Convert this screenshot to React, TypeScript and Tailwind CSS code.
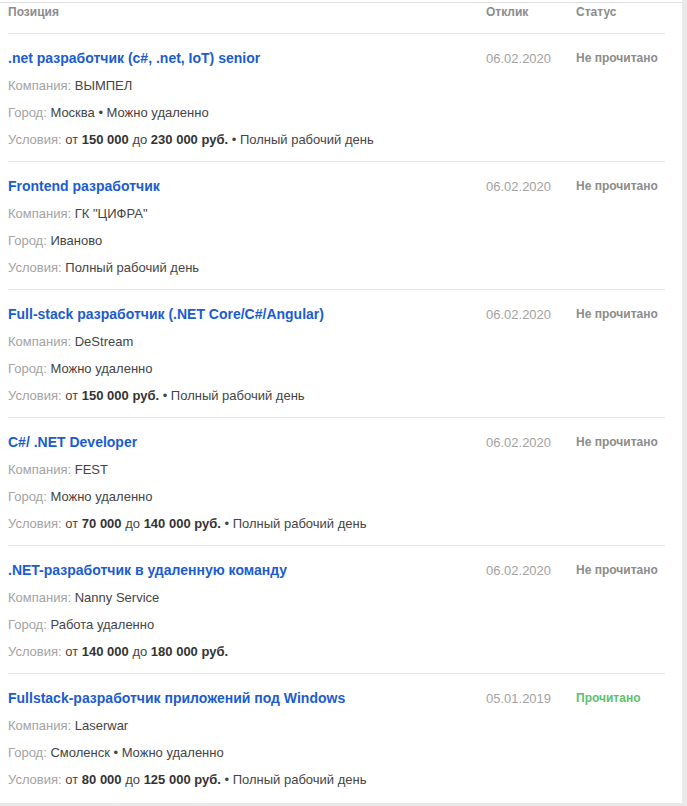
import React from "react";

type Vacancy = {
  title: string;
  company: string;
  city: React.ReactNode;
  terms: React.ReactNode;
  date: string;
  read: boolean;
};

const B = ({ children }: { children: React.ReactNode }) => (
  <b className="font-bold text-[#333]">{children}</b>
);

const vacancies: Vacancy[] = [
  {
    title: ".net разработчик (c#, .net, IoT) senior",
    company: "ВЫМПЕЛ",
    city: "Москва • Можно удаленно",
    terms: (
      <>
        от <B>150 000</B> до <B>230 000 руб.</B> • Полный рабочий день
      </>
    ),
    date: "06.02.2020",
    read: false,
  },
  {
    title: "Frontend разработчик",
    company: 'ГК "ЦИФРА"',
    city: "Иваново",
    terms: "Полный рабочий день",
    date: "06.02.2020",
    read: false,
  },
  {
    title: "Full-stack разработчик (.NET Core/C#/Angular)",
    company: "DeStream",
    city: "Можно удаленно",
    terms: (
      <>
        от <B>150 000 руб.</B> • Полный рабочий день
      </>
    ),
    date: "06.02.2020",
    read: false,
  },
  {
    title: "C#/ .NET Developer",
    company: "FEST",
    city: "Можно удаленно",
    terms: (
      <>
        от <B>70 000</B> до <B>140 000 руб.</B> • Полный рабочий день
      </>
    ),
    date: "06.02.2020",
    read: false,
  },
  {
    title: ".NET-разработчик в удаленную команду",
    company: "Nanny Service",
    city: "Работа удаленно",
    terms: (
      <>
        от <B>140 000</B> до <B>180 000 руб.</B>
      </>
    ),
    date: "06.02.2020",
    read: false,
  },
  {
    title: "Fullstack-разработчик приложений под Windows",
    company: "Laserwar",
    city: "Смоленск • Можно удаленно",
    terms: (
      <>
        от <B>80 000</B> до <B>125 000 руб.</B> • Полный рабочий день
      </>
    ),
    date: "05.01.2019",
    read: true,
  },
];

// Label + value line inside a vacancy row
function Line({ label, children }: { label: string; children: React.ReactNode }) {
  return (
    <div className="leading-[27px] text-[13px] text-[#444]">
      <span className="text-[#a3a3a3]">{label}: </span>
      {children}
    </div>
  );
}

export default function App() {
  return (
    <div
      className="min-h-[806px] w-full bg-[#e9e9e9] pr-[5px] pb-[3px]"
      style={{ fontFamily: '"Liberation Sans", Arial, sans-serif' }}
    >
      <div className="bg-white pt-[2px] pb-[2px]">
        <div className="border-t border-[#dedede] pl-2 pr-[17px]">
          {/* table header */}
          <div className="flex h-[31px] items-start border-b border-[#e8e8e8] text-[12px] leading-[18px] font-bold text-[#8c8c8c]">
            <div className="w-[478px]">Позиция</div>
            <div className="w-[90px]">Отклик</div>
            <div>Статус</div>
          </div>

          {vacancies.map((v, i) => (
            <div
              key={i}
              className={`flex pt-[11px] pb-[8px] ${
                i < vacancies.length - 1 ? "border-b border-[#e8e8e8]" : ""
              }`}
            >
              <div className="w-[478px]">
                <div className="text-[14px] leading-[27px] font-bold text-[#1b5cd0]">
                  {v.title}
                </div>
                <Line label="Компания">{v.company}</Line>
                <Line label="Город">{v.city}</Line>
                <Line label="Условия">{v.terms}</Line>
              </div>
              <div className="w-[90px] text-[13px] leading-[27px] text-[#a3a3a3]">
                {v.date}
              </div>
              <div
                className={`text-[12px] leading-[27px] font-bold ${
                  v.read ? "text-[#5cc16e]" : "text-[#8c8c8c]"
                }`}
              >
                {v.read ? "Прочитано" : "Не прочитано"}
              </div>
            </div>
          ))}
        </div>
      </div>
    </div>
  );
}
